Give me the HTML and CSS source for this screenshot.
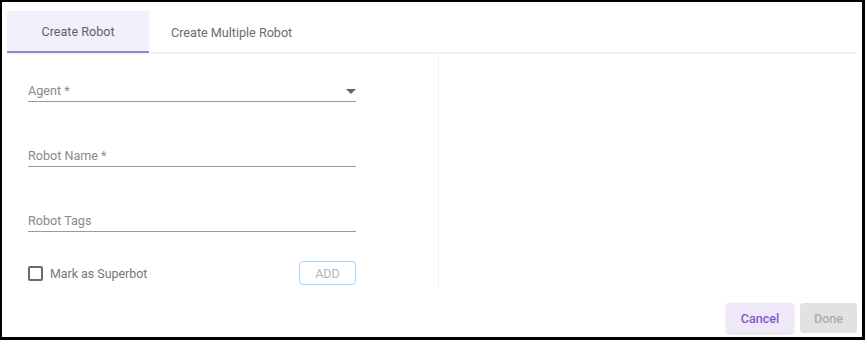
FILE: index.html
```html
<!DOCTYPE html>
<html>
<head>
<meta charset="utf-8">
<link rel="stylesheet" href="styles.css">
</head>
<body>
<div class="frame">
  <div class="tabs">
    <div class="tab active">Create Robot</div>
    <div class="tab">Create Multiple Robot</div>
  </div>
  <div class="body">
    <div class="form">
      <div class="field">
        <span class="label">Agent *</span>
        <svg class="arrow" width="10" height="5" viewBox="0 0 10 5"><path d="M0 0 L10 0 L5 5 Z" fill="#666"/></svg>
      </div>
      <div class="field"><span class="label">Robot Name *</span></div>
      <div class="field"><span class="label">Robot Tags</span></div>
      <div class="row">
        <label class="check"><span class="box"></span><span class="check-text">Mark as Superbot</span></label>
        <button class="add">ADD</button>
      </div>
    </div>
    <div class="side"></div>
  </div>
  <div class="footer">
    <button class="btn cancel">Cancel</button>
    <button class="btn done">Done</button>
  </div>
</div>
</body>
</html>
```

FILE: styles.css
```css
* { box-sizing: border-box; }
html, body { margin: 0; padding: 0; background: #fff; }
body { font-family: Roboto, "Noto Sans", Arial, sans-serif; }

.frame {
  width: 865px;
  height: 340px;
  border-style: solid;
  border-color: #000;
  border-width: 2px 3px 3px 2px;
  padding: 9px 5px 0 5px;
  display: flex;
  flex-direction: column;
}

.tabs {
  display: flex;
  height: 43px;
  border-bottom: 2px solid #f1f1f1;
}
.tab {
  height: 42px;
  display: flex;
  align-items: center;
  justify-content: center;
  font-size: 12.6px;
  color: #6b6b6b;
  padding: 0 22px;
}
.tab.active {
  width: 142px;
  background: #f4f0fb;
  border-bottom: 2px solid #9f80da;
  color: #626262;
}

.body {
  display: flex;
  height: 234px;
}
.form {
  width: 432px;
  border-right: 1px solid #efefef;
  padding: 25px 0 0 21px;
}
.field {
  width: 328px;
  height: 23px;
  border-bottom: 1px solid #9a9a9a;
  display: flex;
  align-items: center;
  justify-content: space-between;
  margin-bottom: 42px;
}
.field:nth-child(3) { margin-bottom: 29px; }
.label {
  font-size: 12.6px;
  color: #8a8a8a;
}
.arrow { margin-top: 2px; }

.row {
  width: 328px;
  display: flex;
  align-items: center;
  justify-content: space-between;
  height: 24px;
}
.check { display: flex; align-items: center; }
.box {
  width: 15px;
  height: 15px;
  border: 2px solid #6a6a6a;
  border-radius: 2px;
}
.check-text {
  margin-left: 7px;
  font-size: 12.4px;
  color: #777;
}
.add {
  width: 57px;
  height: 24px;
  border: 1px solid #a8d4fa;
  border-radius: 4px;
  background: #fff;
  color: #b5b5b5;
  font-family: inherit;
  font-size: 12.5px;
  padding: 0;
}

.side { flex: 1; }

.footer {
  display: flex;
  justify-content: flex-end;
  gap: 6px;
  padding-top: 15px;
}
.btn {
  height: 30px;
  border: none;
  border-radius: 4px;
  font-family: inherit;
  font-size: 12.6px;
  font-weight: 500;
  padding: 0;
}
.cancel {
  width: 68px;
  background: #efe8f8;
  color: #8558cc;
  box-shadow: 0 1px 2px rgba(0,0,0,0.18);
}
.done {
  width: 57px;
  background: #e2e2e2;
  color: #adadad;
}
```
